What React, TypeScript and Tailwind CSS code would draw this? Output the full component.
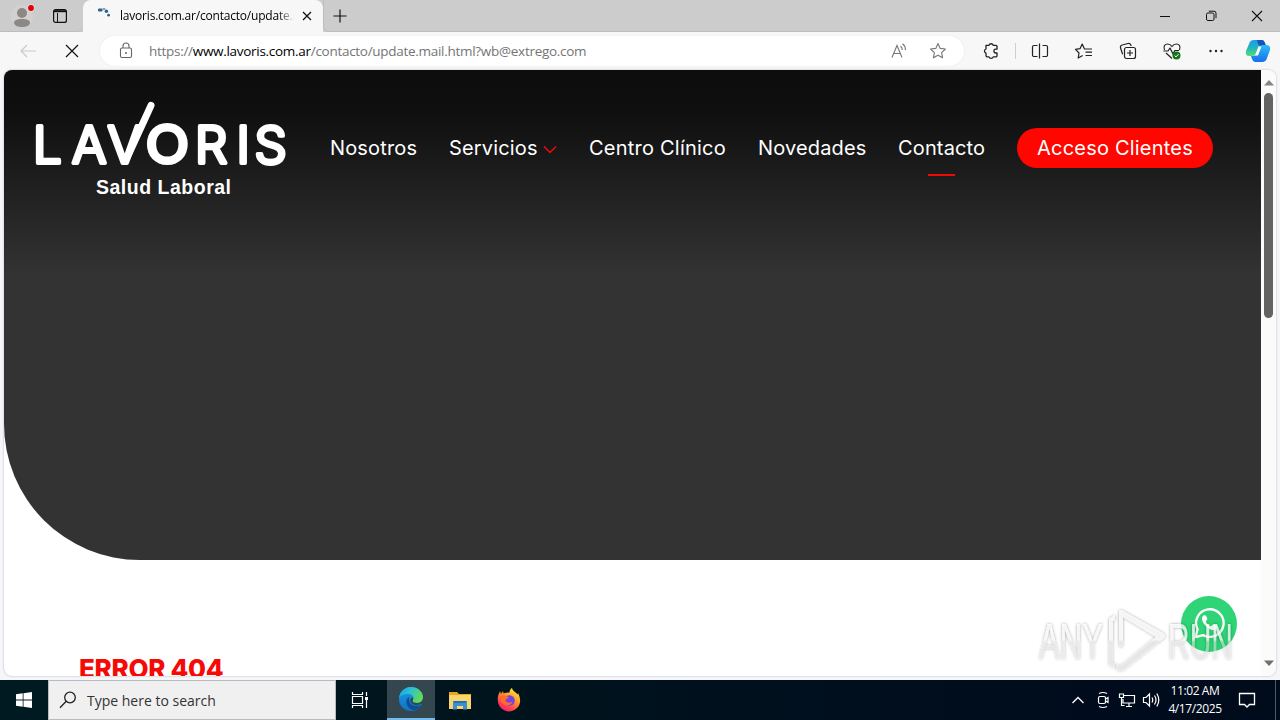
import React from "react";

const ui = "font-['Open_Sans','Noto_Sans',sans-serif]";

function TabStrip() {
  return (
    <div className="relative flex h-8 w-full bg-[#cccccc]">
      <div className="flex w-[83px] items-center rounded-br-[6px] border-b border-[#bdbdbd]">
        <svg className="ml-[10px]" width="28" height="28" viewBox="0 0 28 28">
          <circle cx="12" cy="14" r="11" fill="#d3d1cf" />
          <circle cx="12" cy="11" r="5" fill="#8c8886" />
          <path d="M4 21c0-3 3-4 8-4s8 1 8 4c-1 3-4 4-8 4s-7-1-8-4z" fill="#8c8886" />
          <circle cx="21" cy="6" r="3.8" fill="#e8d4d4" />
          <circle cx="21" cy="6" r="2.9" fill="#e0000b" />
        </svg>
        <svg className="ml-[14px]" width="16" height="16" viewBox="0 0 16 16" fill="none" stroke="#111" strokeWidth="1.2">
          <rect x="1.6" y="1.6" width="12.8" height="12.8" rx="2" />
          <path d="M2 3.2h12" strokeWidth="2" />
          <path d="M5.5 5v9" strokeWidth="1" />
        </svg>
      </div>
      <div className="flex w-[240px] items-center rounded-t-[8px] bg-[#f7f7f7]">
        <svg className="ml-[14px]" width="14" height="20" viewBox="0 0 14 20" fill="#2c6190">
          <rect x="1" y="2.500" width="4.5" height="3" rx="1.2" />
          <rect x="5.5" y="2" width="3" height="2" rx="1" opacity=".6" />
          <circle cx="9.4" cy="5.2" r="1.7" />
          <circle cx="11.6" cy="9.2" r="1.4" />
        </svg>
        <div className={`${ui} ml-[9px] w-[176px] whitespace-nowrap text-[12px] leading-5 tracking-[-0.2px] text-black [mask-image:linear-gradient(to_right,black_158px,transparent_174px)]`}>
          lavoris.com.ar/contacto/update.m
        </div>
        <svg className="ml-[5px]" width="12" height="12" viewBox="0 0 12 12" stroke="#111" strokeWidth="1.3">
          <path d="M2 2l8 8M10 2l-8 8" />
        </svg>
      </div>
      <div className="flex flex-1 items-center rounded-bl-[6px] border-b border-l border-[#bdbdbd]">
        <svg className="ml-[8px]" width="16" height="16" viewBox="0 0 16 16" stroke="#111" strokeWidth="1.2">
          <path d="M8 1.5v13M1.5 8h13" />
        </svg>
        <div className="flex-1" />
        <svg className="mr-[34px]" width="12" height="12" viewBox="0 0 12 12" stroke="#111">
          <path d="M1 6.5h10" />
        </svg>
        <svg className="mr-[34px]" width="12" height="12" viewBox="0 0 12 12" stroke="#111" fill="none">
          <rect x="1.5" y="3" width="7.5" height="7.5" rx="1.4" />
          <path d="M3.8 1.2H9a2 2 0 0 1 2 2v5" />
        </svg>
        <svg className="mr-[17px]" width="12" height="12" viewBox="0 0 12 12" stroke="#111" strokeWidth="1.1">
          <path d="M1 1l10 10M11 1L1 11" />
        </svg>
      </div>
    </div>
  );
}

const STAR = "M10 2.6l2.2 4.8 5.2.6-3.8 3.6 1 5.2-4.6-2.6-4.6 2.6 1-5.2L2.6 8l5.2-.6z";

function Toolbar() {
  return (
    <div className="flex h-[38px] w-full items-center bg-[#f7f7f7]">
      <svg className="ml-[18px]" width="20" height="20" viewBox="0 0 20 20" fill="none" stroke="#c9c9c9" strokeWidth="1.2">
        <path d="M18 10H3M9 4L3 10l6 6" />
      </svg>
      <svg className="ml-[26px]" width="16" height="16" viewBox="0 0 16 16" stroke="#111" strokeWidth="1.2">
        <path d="M2 2l12 12M14 2L2 14" />
      </svg>
      <div className="ml-[20px] flex h-[30px] w-[864px] items-center rounded-full bg-white shadow-[0_0_2px_#e6e6e6]">
        <svg className="ml-[18px]" width="16" height="18" viewBox="0 0 16 18" fill="none" stroke="#666" strokeWidth="1.1">
          <rect x="2.5" y="6" width="11" height="9.500" rx="1.5" />
          <path d="M5 6V4a3 3 0 0 1 6 0v2" />
          <circle cx="8" cy="11" r="1" fill="#666" stroke="none" />
        </svg>
        <div className={`${ui} ml-[15px] whitespace-nowrap text-[13.5px] leading-5 tracking-[-0.29px] text-[#757575]`}>
          https://<span className="text-black">www.lavoris.com.ar</span>/contacto/update.mail.html?wb@extrego.com
        </div>
        <div className="flex-1" />
        <svg width="18" height="18" viewBox="0 0 18 18" fill="none" stroke="#777" strokeWidth="1.1">
          <path d="M2 15.5L7 3.5l5 12M3.8 11.5h6.4" />
          <path d="M10.5 4.2q1.8 1.3 1.8 3.8M12.5 1.8q3 2.2 3 6.2" />
        </svg>
        <svg className="ml-[20px] mr-[16px]" width="20" height="20" viewBox="0 0 20 20" fill="none" stroke="#777" strokeWidth="1.1" strokeLinejoin="round">
          <path d={STAR} />
        </svg>
      </div>
      <svg className="ml-[17px]" width="20" height="20" viewBox="0 0 20 20" fill="none" stroke="#222" strokeWidth="1.3" strokeLinejoin="round">
        <path d="M5 4.3h3a2.2 2.2 0 0 1 4.2 0h2.6a1.2 1.2 0 0 1 1.2 1.2v2.7h-1.2a1.9 1.9 0 0 0 0 3.8H16v2.7a1.2 1.2 0 0 1-1.2 1.2h-2.6a2.2 2.2 0 0 1-4.2 0H6.500a1.500 1.500 0 0 1-1.500-1.500V12.200a2.200 2.200 0 0 1 0-4.200z" />
      </svg>
      <div className="ml-[14px] h-4 w-px bg-[#cfcfcf]" />
      <svg className="ml-[14px]" width="20" height="20" viewBox="0 0 20 20" fill="none" stroke="#222" strokeWidth="1.2">
        <path d="M7.500 4.500H4a1.500 1.500 0 0 0-1.500 1.500v8A1.500 1.500 0 0 0 4 15.500h3.500M12.500 4.500H16a1.500 1.500 0 0 1 1.500 1.500v8a1.500 1.500 0 0 1-1.500 1.500h-3.500M9.500 2.500v15" />
      </svg>
      <svg className="ml-[24px]" width="20" height="20" viewBox="0 0 20 20" fill="none" stroke="#222" strokeWidth="1.2" strokeLinejoin="round">
        <path d="M10.500 8L8.200 3 6 7.700l-4.500.6L5 12l-.8 5 4.500-2.500M10 8h8M11.500 11.200H18M11.500 14.500H18" />
      </svg>
      <svg className="ml-[24px]" width="20" height="20" viewBox="0 0 20 20" fill="none" stroke="#222" strokeWidth="1.2">
        <rect x="6.500" y="6.500" width="11" height="11" rx="2" />
        <path d="M12 9v6M9 12h6M4.600 13.200L2.500 6.800Q2 4.500 4.200 4L10 2.500q2-.5 2.800 1.500l.4 1" />
      </svg>
      <svg className="ml-[24px]" width="20" height="20" viewBox="0 0 20 20" fill="none" stroke="#222" strokeWidth="1.200" strokeLinejoin="round">
        <path d="M2.500 9C1 5 3 3 5.500 3 8 3 9 4 10 5.500 11 4 12 3 14.500 3 17 3 19 5 17.500 9M1.500 10H6l2-3 3 6 1.800-3.500H17M4 12l6 5.500" />
        <circle cx="14.500" cy="14.500" r="4" fill="#17751b" stroke="none" />
        <path d="M12.700 14.600l1.300 1.300 2.500-2.700" stroke="#fff" strokeWidth="1" />
      </svg>
      <svg className="ml-[24px]" width="20" height="20" viewBox="0 0 20 20" fill="#222">
        <circle cx="4.500" cy="10" r="1.200" /><circle cx="10" cy="10" r="1.200" /><circle cx="15.500" cy="10" r="1.200" />
      </svg>
      <svg className="ml-[19px]" width="26" height="26" viewBox="0 0 26 26">
        <defs>
          <linearGradient id="cpA" x1="0" y1="0" x2="0" y2="1"><stop offset="0" stopColor="#1a9ce8" /><stop offset=".5" stopColor="#23b5c0" /><stop offset="1" stopColor="#57dc74" /></linearGradient>
          <linearGradient id="cpB" x1="0" y1="0" x2="0" y2="1"><stop offset="0" stopColor="#2dbcf8" /><stop offset="1" stopColor="#1670ee" /></linearGradient>
        </defs>
        <path d="M9 2h8q2 0 3 3l1 3h-5q-2 0-3 3l-2 5q-1 2-4 2H4q-4 0-3-5L4 6q1-4 5-4z" fill="url(#cpA)" />
        <path d="M12 2h5q2 0 3 3l1 3h-5q-2 0-3-2z" fill="#1455b5" />
        <path d="M17 24H10q-2 0-3-3l-1-3h2q3 0 4-3l2-5q1-3 4-3h3q5 0 4 5l-3 8q-1 4-5 4z" fill="url(#cpB)" />
        <path d="M13.500 8.500h3l-3.500 9h-3z" fill="#fff" />
      </svg>
    </div>
  );
}

function Logo() {
  return (
    <svg className="ml-[26px] mt-[26px] shrink-0" width="270" height="110" viewBox="30 96 270 110" fill="#fff">
      <text x="33 72 107.500 146.500 195 236.500 254.500" y="162.500" fontSize="51" fontFamily="Inter, sans-serif" fontWeight="300" stroke="#fff" strokeWidth="4" strokeLinejoin="round">
        LAV<tspan fontFamily="Lato, sans-serif" fontSize="52" fontWeight="400">O</tspan>RIS
      </text>
      <path d="M126 160L151 105.500" stroke="#fff" strokeWidth="7" strokeLinecap="round" />
      <text x="96" y="194" fontSize="19.500" fontFamily="'Liberation Sans', sans-serif" fontWeight="700" textLength="135">
        Salud Laboral
      </text>
    </svg>
  );
}

function Header() {
  return (
    <div className="h-[490px] w-full shrink-0 rounded-bl-[136px] bg-[#333333] bg-[linear-gradient(to_bottom,#0d0d0d_0px,#0f0f0f_40px,#1e1e1e_110px,#333333_205px)]">
      <div className="flex items-start">
        <Logo />
        <nav className="mt-[58px] flex h-10 items-center whitespace-nowrap font-['Inter',sans-serif] text-[20px] tracking-[0.15px] text-white">
          <a className="ml-[30px] w-[86px]">Nosotros</a>
          <a className="ml-[33px] flex w-[108px] items-center justify-between">
            Servicios
            <svg className="mt-1" width="14" height="10" viewBox="0 0 14 10" fill="none" stroke="#f00b0b" strokeWidth="1.500">
              <path d="M1 1.500l6 6 6-6" />
            </svg>
          </a>
          <a className="ml-[32px] w-[137px] tracking-[0.22px]">Centro Clínico</a>
          <a className="ml-[32px] w-[108px]">Novedades</a>
          <a className="relative ml-[32px] w-[87px]">
            Contacto
            <span className="absolute left-[30px] top-[41px] h-[2px] w-[27px] bg-[#f00b0b]" />
          </a>
          <a className="ml-[32px] flex h-10 w-[196px] items-center justify-center rounded-full bg-[#ff0600] tracking-[0.2px]">Acceso Clientes</a>
        </nav>
      </div>
    </div>
  );
}

function Watermark() {
  return (
    <svg className="absolute left-[1030px] top-[600px] z-20" width="216" height="80" viewBox="1030 600 216 80">
      <defs>
        <filter id="soft" x="-10%" y="-10%" width="120%" height="120%"><feDropShadow dx="0" dy="0" stdDeviation="1.800" floodColor="#000" floodOpacity=".5" /></filter>
        <linearGradient id="wm" gradientUnits="userSpaceOnUse" x1="0" y1="610" x2="0" y2="672"><stop offset=".48" stopColor="#fff" stopOpacity=".75" /><stop offset=".52" stopColor="#ececec" stopOpacity=".5" /></linearGradient>
      </defs>
      <g filter="url(#soft)" fill="url(#wm)" fontFamily="'Liberation Sans Narrow','Liberation Sans',sans-serif" fontSize="50">
        <text x="1039" y="659" textLength="64" lengthAdjust="spacingAndGlyphs">ANY</text>
        <text x="1168" y="659" textLength="65" lengthAdjust="spacingAndGlyphs">RUN</text>
        <path d="M1109 619l6-4v5l-2 1v42l2 1v4l-6-3zM1119 611q3-2 6 1l38 21q4 3 0 6l-38 30q-5 4-9 0v-5q4 3 7 0l33-27-33-20v30h-4z" />
      </g>
    </svg>
  );
}

function Page() {
  return (
    <div className="flex h-[610px] w-full bg-[#f4f6f9] px-1 pb-1">
      <div className="flex h-[606px] w-[1272px] overflow-hidden rounded-[8px] bg-white shadow-[0_0_2px_#aaa]">
        <main className="flex w-[1257px] flex-col overflow-hidden">
          <Header />
          <h1 className="ml-[75px] mt-[91px] shrink-0 whitespace-nowrap font-['Inter',sans-serif] text-[26px] font-extrabold leading-9 tracking-[-0.3px] text-[#f50a08]">ERROR 404</h1>
        </main>
        <div className="flex w-[15px] flex-col items-center bg-[#fbfbfb]">
          <svg className="mt-[9px]" width="10" height="8" viewBox="0 0 10 8" fill="#858585"><path d="M0 6.500L5 1l5 5.500z" /></svg>
          <div className="mt-[6px] h-[225px] w-[9px] rounded-full bg-[#636363]" />
          <div className="flex-1" />
          <svg className="mb-[9px]" width="10" height="8" viewBox="0 0 10 8" fill="#707070"><path d="M0 1.500h10L5 7z" /></svg>
        </div>
      </div>
    </div>
  );
}

function WhatsApp() {
  return (
    <div className="absolute left-[1181px] top-[596px] z-10 flex size-14 items-center justify-center rounded-full bg-[#2fd477]">
      <svg className="-mt-1" width="33" height="33" viewBox="0 0 34 34" fill="none" stroke="#fff" strokeWidth="2.400" strokeLinejoin="round">
        <path d="M2.500 32l2.200-8A14.200 14.200 0 1 1 10.500 30z" />
        <path d="M11 9.500l2.300.2 1.600 3.800-1.800 2.500c1.200 2.500 3 4 5.500 5l2.200-2.300 4 1.900c.2 2.800-2 4.400-4.300 4.400C15 24 10 18 9.300 14c-.2-2 .4-3.500 1.700-4.500z" fill="#fff" stroke="none" />
      </svg>
    </div>
  );
}

function Taskbar() {
  return (
    <div className="flex h-10 w-full items-center bg-[linear-gradient(to_right,#001a22,#00131d_45%,#000d1d_75%,#000b1c)] text-white">
      <div className="flex h-10 w-12 items-center justify-center">
        <svg width="16" height="16" viewBox="0 0 16 16" fill="#fff">
          <path d="M0 2.200L6.700 1.300V7.600H0zM7.500 1.200L16 0v7.600H7.500zM0 8.400h6.700v6.300L0 13.800zM7.500 8.400H16V16l-8.500-1.200z" />
        </svg>
      </div>
      <div className="flex h-10 w-72 items-center border border-[#b8bcbe] bg-[#f0f0f0]">
        <svg className="ml-[10px]" width="18" height="18" viewBox="0 0 18 18" fill="none" stroke="#222" strokeWidth="1.300">
          <circle cx="11" cy="6.500" r="5.300" /><path d="M7.200 10.300L1 16.800" />
        </svg>
        <span className={`${ui} ml-[10px] mt-[2px] whitespace-nowrap text-[14px] leading-5 text-[#333]`}>Type here to search</span>
      </div>
      <div className="flex h-10 w-[51px] items-center justify-center pr-[3px]">
        <svg width="18" height="18" viewBox="0 0 18 18" fill="none" stroke="#fff" strokeWidth="1.200">
          <path d="M1.500 1v2.500h10V1M1.500 17v-2.500h10V17M1.500 5.500h10v7h-10zM15.500 1v4M15.500 9v8" /><path d="M14 6h3v3h-3z" fill="#fff" stroke="none" />
        </svg>
      </div>
      <div className="flex h-10 w-12 items-center justify-center border-b-2 border-[#76b9ed] bg-[#34474f]">
        <svg width="24" height="24" viewBox="0 0 24 24">
          <defs>
            <linearGradient id="eg" x1="0" y1="0" x2="1" y2=".4"><stop offset="0" stopColor="#1b9de2" /><stop offset=".5" stopColor="#2bc3d2" /><stop offset="1" stopColor="#62d957" /></linearGradient>
            <linearGradient id="eb" x1="0" y1="0" x2="0" y2="1"><stop offset="0" stopColor="#189be0" /><stop offset="1" stopColor="#1272c8" /></linearGradient>
          </defs>
          <circle cx="12" cy="12" r="12" fill="url(#eb)" />
          <path d="M0 11C1 4 6 0 12 0c7 0 12 5 12 10 0 4-3 6-6 6-3 0-4.500-1-4.500-2 0-.8 1-1.400 1-3 0-2-2-4-5.500-4C5 7 1 9 0 11z" fill="url(#eg)" />
          <path d="M10 10c-2 1-3 3-2.500 6 .6 4 4 7 8 7.300 3-1 5.500-3 6.700-5.300-5 2.500-11 .5-12-4-.3-1.600 0-3-.2-4z" fill="#0c4f95" />
          <path d="M13.500 14c0 1 1.500 2 4.500 2 3 0 5.500-1.500 6-4.500v5.500h-2c-4 2.200-9 1-10.500-2-.8-2 .3-3.800 1.500-4.500 1.500.5 1.500 1.800.5 3.500z" fill="#34474f" />
        </svg>
      </div>
      <div className="flex h-10 w-[50px] items-center justify-center">
        <svg width="22" height="19" viewBox="0 0 22 19">
          <path d="M0 1h8l2 2h12v15H0z" fill="#e8a81e" /><path d="M0 4h22v14H0z" fill="#f9d56f" />
          <path d="M4 10h14v8.500h-4v-3.500H8v3.500H4z" fill="#3d8fd1" /><path d="M5 10h12v2H5z" fill="#2472b5" />
        </svg>
      </div>
      <div className="flex h-10 w-12 items-center justify-center">
        <svg width="24" height="24" viewBox="0 0 24 24">
          <defs><linearGradient id="ff" x1=".8" y1="0" x2=".2" y2="1"><stop offset="0" stopColor="#fff044" /><stop offset=".4" stopColor="#ff9a22" /><stop offset=".75" stopColor="#ff3f4d" /><stop offset="1" stopColor="#e51b78" /></linearGradient></defs>
          <path d="M12.500 4.500C12.500 2 14 .5 15 0c.5 3 4 4 5.500 6.500L21 5c3 6 3 11-1 15-4.500 4.500-11.500 4.500-15.800.3C0 16 0 9.500 2 5.500L3 3l1 3 2-3 .5 2.500c2-1 4-1 6-1z" fill="url(#ff)" />
          <circle cx="12.500" cy="12.500" r="5.300" fill="#7542e5" />
          <path d="M4 8c3-2 6 0 8 1.500-1 1.200-3 1-3.500 3 2 3 5 2.500 7 1-1 4-5.500 5-8.500 3-3-2-4-5-3-8.500z" fill="#ff6a2e" />
        </svg>
      </div>
      <div className="flex-1" />
      <svg width="14" height="10" viewBox="0 0 14 10" fill="none" stroke="#fff" strokeWidth="1.300"><path d="M1.500 8L7 2.500 12.500 8" /></svg>
      <svg className="ml-[10px]" width="16" height="18" viewBox="0 0 16 18" fill="none" stroke="#fff" strokeWidth="1.200">
        <rect x="3.500" y="5.500" width="7" height="7" rx="1.500" /><path d="M10.500 8l2.500-1.500v5L10.500 10M4 2.500q4-2 8 0M4 15.500q4 2 8 0" />
      </svg>
      <svg className="ml-[7px]" width="18" height="16" viewBox="0 0 18 16" fill="none" stroke="#fff" strokeWidth="1.200">
        <path d="M6 3.500h10.500v7.500H5V7M8 14.500h6M11 11v3.500M1.500 2h4v3.500h-4zM3.500 5.500v8h3" />
      </svg>
      <svg className="ml-[6px]" width="18" height="16" viewBox="0 0 18 16" fill="none" stroke="#fff" strokeWidth="1.200">
        <path d="M1.500 5.500H4L7.500 2v12L4 10.500H1.500zM10 5.500q1.500 2.500 0 5M12.500 3.500q3 4.500 0 9M14.800 1.500q4 6.500 0 13" />
      </svg>
      <div className={`${ui} ml-[8px] w-[54px] whitespace-nowrap text-center text-[12px] leading-[18px] tracking-[-0.4px]`}>
        <div className="-mx-2">11:02 AM</div>
        <div className="-mx-2">4/17/2025</div>
      </div>
      <svg className="ml-[16px]" width="18" height="18" viewBox="0 0 18 18" fill="none" stroke="#fff" strokeWidth="1.300">
        <path d="M1.500 2.500h15v11h-5L9 16l-2.500-2.500h-5z" />
      </svg>
      <div className="ml-[19px] mr-[4px] h-10 w-px bg-[#4c5864]" />
    </div>
  );
}

export default function App() {
  return (
    <div className="relative flex h-[720px] w-[1280px] flex-col overflow-hidden bg-[#f7f7f7]">
      <TabStrip />
      <Toolbar />
      <Page />
      <Taskbar />
      <WhatsApp />
      <Watermark />
    </div>
  );
}
